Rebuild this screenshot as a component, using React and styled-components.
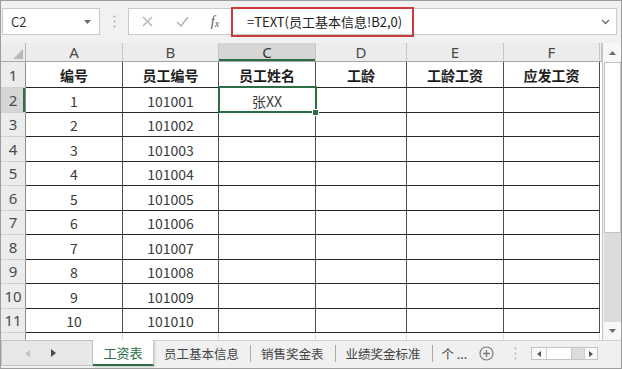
import React from "react";
import styled, { createGlobalStyle, css } from "styled-components";

const GlobalStyle = createGlobalStyle`
  html, body {
    margin: 0;
    padding: 0;
    background: #ffffff;
  }
  body {
    font-family: "Noto Sans CJK SC", "Noto Sans", sans-serif;
  }
`;

const GREEN = "#2b6e45";

const COLS = ["A", "B", "C", "D", "E", "F"];
const HEADS = ["编号", "员工编号", "员工姓名", "工龄", "工龄工资", "应发工资"];
const rows = Array.from({ length: 10 }, (_, i) => ({
  no: i + 1,
  id: 101001 + i,
  name: i === 0 ? "张XX" : "",
}));
const TABS = ["员工基本信息", "销售奖金表", "业绩奖金标准", "个 ..."];

export default function App() {
  return (
    <>
      <GlobalStyle />
      <Frame>
        <Toolbar>
          <NameBox>
            <span>C2</span>
            <svg width="7" height="4" viewBox="0 0 7 4">
              <path d="M0 0h7L3.5 4z" fill="#6b6b6b" />
            </svg>
          </NameBox>
          <Grip>
            <svg width="3" height="13" viewBox="0 0 3 13">
              <circle cx="1.5" cy="1.5" r="1" fill="#a8a8a8" />
              <circle cx="1.5" cy="6.5" r="1" fill="#a8a8a8" />
              <circle cx="1.5" cy="11.5" r="1" fill="#a8a8a8" />
            </svg>
          </Grip>
          <FormulaBar>
            <IconSlot $w={36}>
              <svg width="11" height="11" viewBox="0 0 11 11">
                <path d="M1 1l9 9M10 1l-9 9" stroke="#b3b3b3" strokeWidth="1.4" />
              </svg>
            </IconSlot>
            <IconSlot $w={35}>
              <svg width="13" height="11" viewBox="0 0 13 11">
                <path d="M1 6l4 4 7-9" stroke="#b3b3b3" strokeWidth="1.5" fill="none" />
              </svg>
            </IconSlot>
            <IconSlot $w={30}>
              <Fx>
                f<sub>x</sub>
              </Fx>
            </IconSlot>
            <Formula>=TEXT(员工基本信息!B2,0)</Formula>
            <Chevron>
              <svg width="9" height="6" viewBox="0 0 9 6">
                <path d="M1 1l3.5 3.5L8 1" stroke="#666" strokeWidth="1.3" fill="none" />
              </svg>
            </Chevron>
          </FormulaBar>
        </Toolbar>

        <Body>
          <Sheet>
            <Corner>
              <svg width="10" height="10" viewBox="0 0 10 10">
                <path d="M10 0v10H0z" fill="#b9b9b9" />
              </svg>
            </Corner>
            {COLS.map((c) => (
              <ColHead key={c} $selected={c === "C"}>
                {c}
              </ColHead>
            ))}
            <ColHead />

            <RowHead>1</RowHead>
            {HEADS.map((h) => (
              <Cell key={h} $bold>
                {h}
              </Cell>
            ))}
            <Spare />

            {rows.map((r, i) => (
              <React.Fragment key={r.no}>
                <RowHead $selected={i === 0}>{i + 2}</RowHead>
                <Cell>{r.no}</Cell>
                <Cell>{r.id}</Cell>
                <Cell $selected={i === 0}>{r.name}</Cell>
                <Cell />
                <Cell />
                <Cell />
                <Spare />
              </React.Fragment>
            ))}

            <RowHead>12</RowHead>
            {COLS.map((c) => (
              <EmptyCell key={c} />
            ))}
            <Spare />
          </Sheet>

          <VScroll>
            <ArrowBtn $h={19}>
              <svg width="7" height="4" viewBox="0 0 7 4">
                <path d="M0 4h7L3.5 0z" fill="#6b6b6b" />
              </svg>
            </ArrowBtn>
            <Thumb />
            <Track />
            <ArrowBtn $h={18}>
              <svg width="7" height="4" viewBox="0 0 7 4">
                <path d="M0 0h7L3.5 4z" fill="#6b6b6b" />
              </svg>
            </ArrowBtn>
          </VScroll>
        </Body>

        <TabBar>
          <NavBox>
            <svg width="5" height="7" viewBox="0 0 5 7">
              <path d="M5 0v7L0 3.5z" fill="#c4c4c4" />
            </svg>
            <svg width="5" height="8" viewBox="0 0 5 8">
              <path d="M0 0v8l5-4z" fill="#4a4a4a" />
            </svg>
          </NavBox>
          <ActiveTab>工资表</ActiveTab>
          {TABS.map((t, i) => (
            <React.Fragment key={t}>
              <Tab $last={i === TABS.length - 1}>{t}</Tab>
              {i < TABS.length - 1 && <TabSep />}
            </React.Fragment>
          ))}
          <AddSheet>
            <svg width="15" height="15" viewBox="0 0 15 15">
              <circle cx="7.5" cy="7.5" r="6.5" stroke="#7a7a7a" strokeWidth="1.2" fill="none" />
              <path d="M7.5 4v7M4 7.5h7" stroke="#7a7a7a" strokeWidth="1.3" />
            </svg>
          </AddSheet>
          <SplitDots>
            <svg width="3" height="13" viewBox="0 0 3 13">
              <circle cx="1.5" cy="1.5" r="0.9" fill="#b0b0b0" />
              <circle cx="1.5" cy="6.5" r="0.9" fill="#b0b0b0" />
              <circle cx="1.5" cy="11.5" r="0.9" fill="#b0b0b0" />
            </svg>
          </SplitDots>
          <HScroll>
            <HBtn $w={14}>
              <svg width="4" height="6" viewBox="0 0 4 6">
                <path d="M4 0v6L0 3z" fill="#555" />
              </svg>
            </HBtn>
            <HThumb />
            <HTrack />
            <HBtn $w={12}>
              <svg width="4" height="6" viewBox="0 0 4 6">
                <path d="M0 0v6l4-3z" fill="#555" />
              </svg>
            </HBtn>
          </HScroll>
        </TabBar>
      </Frame>
    </>
  );
}

const Frame = styled.div`
  width: 622px;
  height: 369px;
  box-sizing: border-box;
  border: 1px solid #9d9d9d;
  display: flex;
  flex-direction: column;
  background: #f1f1f1;
  overflow: hidden;
`;

const Toolbar = styled.div`
  height: 42px;
  flex: none;
  display: flex;
  align-items: flex-start;
  padding: 7px 0 0 1px;
  box-sizing: border-box;
`;

const NameBox = styled.div`
  width: 98px;
  height: 27px;
  box-sizing: border-box;
  border: 1px solid #cacaca;
  background: #fff;
  display: flex;
  align-items: center;
  justify-content: space-between;
  padding: 0 8px 0 8px;
  font-size: 13px;
  color: #333;
`;

const Grip = styled.div`
  width: 28px;
  height: 27px;
  display: flex;
  align-items: center;
  justify-content: center;
`;

const FormulaBar = styled.div`
  width: 489px;
  height: 27px;
  box-sizing: border-box;
  border: 1px solid #cacaca;
  background: #fff;
  display: flex;
  align-items: center;
`;

const IconSlot = styled.div`
  width: ${(p) => p.$w}px;
  height: 100%;
  display: flex;
  align-items: center;
  justify-content: center;
`;

const Fx = styled.span`
  font-family: "Liberation Serif", serif;
  font-style: italic;
  font-size: 14px;
  color: #555;
  sub {
    font-size: 10px;
    vertical-align: -1px;
  }
`;

const Formula = styled.div`
  width: 183px;
  height: 30px;
  box-sizing: border-box;
  margin-left: 1px;
  border: 2px solid #cc3b3b;
  display: flex;
  align-items: center;
  padding-left: 14px;
  font-size: 13px;
  color: #222;
  white-space: nowrap;
`;

const Chevron = styled.div`
  margin-left: auto;
  margin-right: 6px;
  display: flex;
  align-items: center;
`;

const Body = styled.div`
  height: 297px;
  flex: none;
  display: flex;
`;

const Sheet = styled.div`
  flex: 1;
  overflow: hidden;
  background: #fff;
  display: grid;
  grid-template-columns: 25px 97px 96px 97px 91px 97px 96px 1fr;
  grid-template-rows: 19px 26px repeat(11, 24.5px);
  align-content: start;
`;

const headBase = css`
  box-sizing: border-box;
  background: #ececec;
  color: #4a4a4a;
  font-family: "Noto Sans", "Open Sans", sans-serif;
  display: flex;
  justify-content: center;
`;

const Corner = styled.div`
  ${headBase};
  border-right: 1px solid #b4b4b4;
  border-bottom: 1px solid #a6a6a6;
  align-items: flex-end;
  justify-content: flex-end;
  padding: 0 2px 2px 0;
`;

const ColHead = styled.div`
  ${headBase};
  font-size: 15px;
  line-height: 1;
  align-items: flex-end;
  padding-bottom: 1px;
  border-right: 1px solid #c6c6c6;
  border-bottom: 1px solid #a6a6a6;
  ${(p) =>
    p.$selected &&
    css`
      background: #d6d6d6;
      color: #333;
      box-shadow: inset 0 -2px 0 ${GREEN};
    `}
`;

const RowHead = styled.div`
  ${headBase};
  font-size: 15px;
  line-height: 1;
  align-items: flex-end;
  padding-bottom: 4px;
  border-right: 1px solid #8f8f8f;
  border-bottom: 1px solid #d0d0d0;
  ${(p) =>
    p.$selected &&
    css`
      background: #d6d6d6;
      box-shadow: inset -2px 0 0 ${GREEN};
    `}
`;

const Cell = styled.div`
  position: relative;
  box-sizing: border-box;
  border-right: 1px solid #4d4d4d;
  border-bottom: 1px solid #262626;
  display: flex;
  align-items: center;
  justify-content: center;
  font-size: 14px;
  color: ${(p) => (p.$bold ? "#1e1e1e" : "#3a3a3a")};
  font-weight: ${(p) => (p.$bold ? 700 : 400)};
  padding-top: ${(p) => (p.$bold ? 0 : 2)}px;
  ${(p) =>
    p.$selected &&
    css`
      &::after {
        content: "";
        position: absolute;
        top: -2px;
        left: -1px;
        right: -2px;
        bottom: -1px;
        border: 2px solid ${GREEN};
      }
      &::before {
        content: "";
        position: absolute;
        right: -4px;
        bottom: -4px;
        width: 5px;
        height: 5px;
        background: ${GREEN};
        border: 1px solid #fff;
        z-index: 1;
      }
    `}
`;

const EmptyCell = styled.div`
  border-right: 1px solid #dadada;
  border-bottom: 1px solid #dadada;
`;

const Spare = styled.div`
  background: #fff;
`;

const VScroll = styled.div`
  width: 19px;
  flex: none;
  box-sizing: border-box;
  border-left: 1px solid #c4c4c4;
  background: #f4f4f4;
  display: flex;
  flex-direction: column;
  padding-left: 1px;
`;

const ArrowBtn = styled.div`
  height: ${(p) => p.$h}px;
  flex: none;
  display: flex;
  align-items: center;
  justify-content: center;
  background: #f7f7f7;
`;

const Thumb = styled.div`
  height: 171px;
  flex: none;
  box-sizing: border-box;
  background: #fff;
  border: 1px solid #c2c2c2;
`;

const Track = styled.div`
  flex: 1;
  background: #dcdcdc;
`;

const TabBar = styled.div`
  flex: 1;
  display: flex;
  align-items: flex-start;
  background: #f0f0f0;
  border-top: 1px solid #d2d2d2;
  font-size: 12.5px;
  color: #444;
`;

const NavBox = styled.div`
  width: 92px;
  height: 26px;
  margin-top: -1px;
  box-sizing: border-box;
  border: 1px solid #c4c4c4;
  background: #e7e7e7;
  display: flex;
  align-items: center;
  gap: 21px;
  padding-left: 23px;
`;

const ActiveTab = styled.div`
  width: 61px;
  height: 26px;
  margin-top: -1px;
  box-sizing: border-box;
  background: #fff;
  border-right: 1px solid #c4c4c4;
  border-bottom: 2px solid ${GREEN};
  color: ${GREEN};
  font-size: 13px;
  display: flex;
  align-items: center;
  justify-content: center;
  box-shadow: 1px 1px 2px rgba(0, 0, 0, 0.15);
`;

const Tab = styled.div`
  height: 25px;
  display: flex;
  align-items: center;
  padding: 0 ${(p) => (p.$last ? 0 : 11)}px 0 ${(p) => (p.$last ? 9 : 10)}px;
  white-space: nowrap;
`;

const TabSep = styled.div`
  width: 1px;
  height: 17px;
  margin-top: 4px;
  background: #a9a9a9;
`;

const AddSheet = styled.div`
  height: 25px;
  margin-left: 12px;
  display: flex;
  align-items: center;
`;

const SplitDots = styled.div`
  height: 25px;
  margin-left: 20px;
  display: flex;
  align-items: center;
`;

const HScroll = styled.div`
  width: 67px;
  height: 13px;
  margin: 6px 0 0 14px;
  box-sizing: border-box;
  border: 1px solid #c4c4c4;
  display: flex;
  background: #dcdcdc;
`;

const HBtn = styled.div`
  width: ${(p) => p.$w}px;
  background: #fafafa;
  display: flex;
  align-items: center;
  justify-content: center;
  border-right: 1px solid #d0d0d0;
  &:last-child {
    border-right: none;
    border-left: 1px solid #d0d0d0;
  }
`;

const HThumb = styled.div`
  width: 24px;
  background: #fff;
  border-right: 1px solid #c4c4c4;
`;

const HTrack = styled.div`
  flex: 1;
`;
